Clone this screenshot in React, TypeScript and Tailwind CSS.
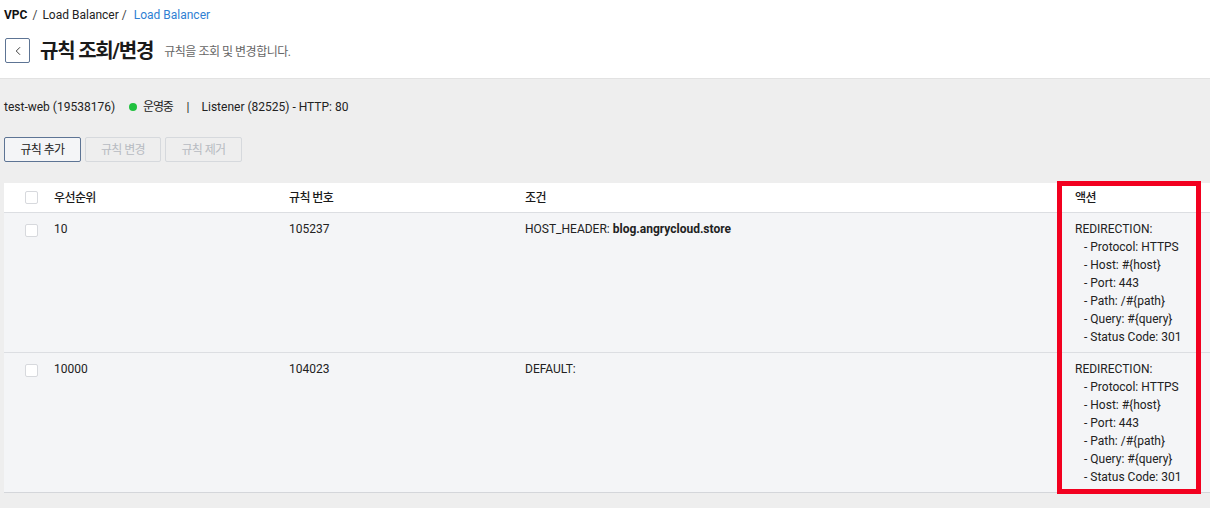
import { ChevronLeft } from "lucide-react";

const ko = "tracking-[-0.05em]";

const actionLines = [
  "- Protocol: HTTPS",
  "- Host: #{host}",
  "- Port: 443",
  "- Path: /#{path}",
  "- Query: #{query}",
  "- Status Code: 301",
];

const rules = [
  { priority: "10", id: "105237", cond: ["HOST_HEADER: ", "blog.angrycloud.store"] },
  { priority: "10000", id: "104023", cond: ["DEFAULT:", ""] },
];

const Checkbox = () => (
  <span className="block w-[13px] h-[13px] bg-white border border-[#d7d9dd] rounded-[2px]" />
);

const cols = "grid grid-cols-[40px_235px_236px_550px_1fr]";

export default function App() {
  return (
    <div
      className="relative w-[1210px] h-[508px] overflow-hidden bg-[#eeeeee] text-[#222] text-[12px]"
      style={{ fontFamily: 'Roboto, "Noto Sans CJK KR", sans-serif' }}
    >
      <header className="h-[79px] bg-white border-b border-[#e2e2e2] pl-1">
        <nav className="pt-[7px] h-[23px] leading-[16px] flex items-center">
          <span className="font-bold text-[#111]">VPC</span>
          <span className="ml-[5px] text-[#444]">/</span>
          <span className="ml-[5px] text-[#222]">Load Balancer</span>
          <span className="ml-[3px] text-[#444]">/</span>
          <span className="ml-[7px] text-[#2f7fd3]">Load Balancer</span>
        </nav>
        <div className="mt-[15px] flex items-center">
          <button className="ml-px w-[25px] h-[25px] flex items-center justify-center border border-[#5d7494] rounded-[2px] bg-white">
            <ChevronLeft className="w-[14px] h-[14px] text-[#333]" strokeWidth={1.6} />
          </button>
          <h1 className="ml-[10px] text-[20px] font-bold text-[#1a1a1a] leading-none tracking-[-0.06em]">규칙 조회/변경</h1>
          <p className="ml-[11px] mt-[3px] text-[12px] text-[#666] tracking-[-0.04em]">규칙을 조회 및 변경합니다.</p>
        </div>
      </header>

      <div className="pl-1 pt-5 h-[36px] leading-[16px] flex items-start text-[#222]">
        <span>test-web (19538176)</span>
        <span className="ml-[14px] mt-[4px] w-[8px] h-[8px] rounded-full bg-[#20c13f]" />
        <span className="ml-[6px] tracking-[-0.1em]">운영중</span>
        <span className="ml-[14px]">|</span>
        <span className="ml-[12px]">Listener (82525) - HTTP: 80</span>
      </div>

      <div className="pl-1 mt-[22px] flex gap-[4px]">
        <button className={`w-[77px] h-[25px] border border-[#5d7494] rounded-[2px] bg-[#f4f5f7] text-[#222] ${ko}`}>
          규칙 추가
        </button>
        <button className={`w-[76px] h-[25px] border border-[#d6d9dd] rounded-[2px] text-[#b7bbc1] ${ko}`}>
          규칙 변경
        </button>
        <button className={`w-[77px] h-[25px] border border-[#d6d9dd] rounded-[2px] text-[#b7bbc1] ${ko}`}>
          규칙 제거
        </button>
      </div>

      <div className="ml-1 mt-[21px] border-b border-[#d4d6da]">
        <div className={`${cols} h-[30px] items-center bg-white border-b border-[#dcdee2] font-medium text-[#1a1a1a]`}>
          <div className="pl-[21px]">
            <Checkbox />
          </div>
          <div className={`pl-[10px] ${ko}`}>우선순위</div>
          <div className={`pl-[10px] ${ko}`}>규칙 번호</div>
          <div className={`pl-[10px] ${ko}`}>조건</div>
          <div className={`pl-[10px] ${ko}`}>액션</div>
        </div>
        {rules.map((r, i) => (
          <div
            key={r.id}
            className={`${cols} bg-[#f4f5f7] pt-[7px] pb-[6px] leading-[18px] text-[#222] ${i === 0 ? "border-b border-[#dcdee2]" : ""}`}
          >
            <div className="pl-[21px] pt-[4px]">
              <Checkbox />
            </div>
            <div className="pl-[10px]">{r.priority}</div>
            <div className="pl-[10px]">{r.id}</div>
            <div className="pl-[10px]">
              {r.cond[0]}
              <span className="font-bold">{r.cond[1]}</span>
            </div>
            <div className="pl-[10px]">
              <div>REDIRECTION:</div>
              {actionLines.map((l) => (
                <div key={l} className="pl-[9px]">
                  {l}
                </div>
              ))}
            </div>
          </div>
        ))}
      </div>

      <div className="absolute left-[1057px] top-[181px] w-[144px] h-[313px] border-[5px] border-[#f2001f]" />
    </div>
  );
}
